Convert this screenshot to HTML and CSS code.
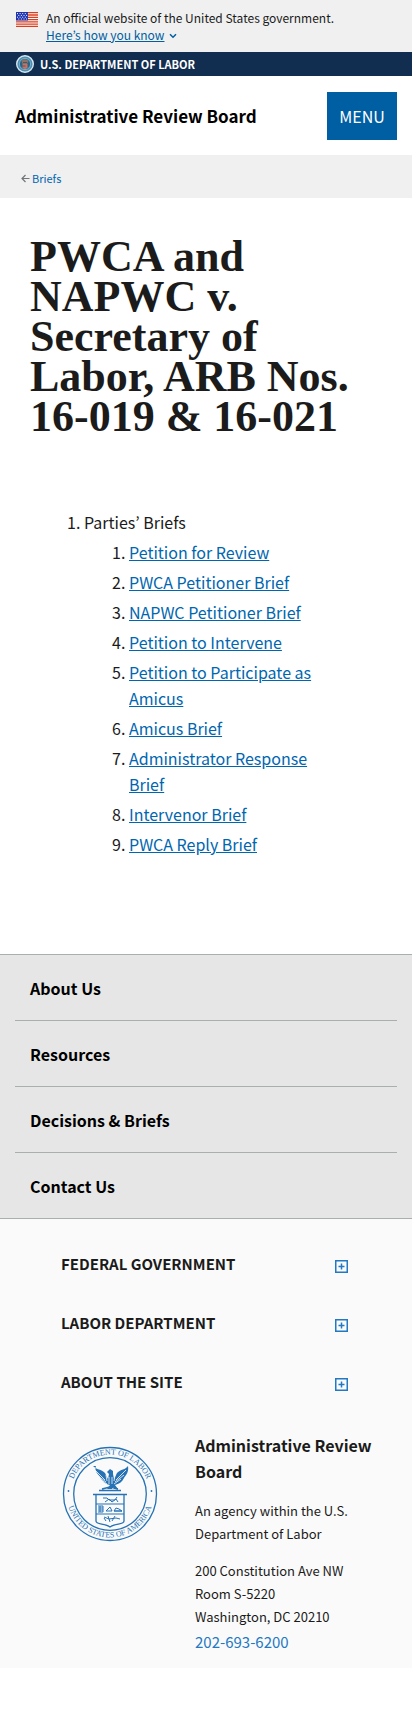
FILE: index.html
```html
<!DOCTYPE html>
<html lang="en">
<head>
<meta charset="utf-8">
<meta name="viewport" content="width=device-width, initial-scale=1">
<title>PWCA and NAPWC v. Secretary of Labor | Administrative Review Board</title>
<link rel="stylesheet" href="styles.css">
</head>
<body>
<section class="banner" aria-label="Official website of the United States government">
  <svg class="flag" viewBox="0 0 22 15" aria-hidden="true">
    <path fill="#fff" d="M0 0h22v15H0z"/>
    <path stroke="#db3e1f" stroke-width="1.3" d="M0 .6h22M0 3h22M0 5.3h22M0 7.6h22M0 9.9h22M0 12.2h22M0 14.4h22"/>
    <path fill="#1e33b1" d="M0 0h12v8.5H0z"/>
    <path stroke="#fff" stroke-width="1" stroke-dasharray="1 1.6" d="M1 1.6h10.500M2.300 3.400h9M1 5.200h10.500M2.300 7h9"/>
  </svg>
  <div>
    <p class="banner-text">An official website of the United States government.</p>
    <button class="banner-button" type="button"><span class="banner-label">Here’s how you know</span><svg class="chevron" viewBox="0 0 8 6" aria-hidden="true"><path d="M1 1.300l3 3 3-3" fill="none" stroke="currentColor" stroke-width="1.500"/></svg></button>
  </div>
</section>

<div class="agency-bar">
  <svg class="agency-seal" viewBox="0 0 18 18" aria-hidden="true">
    <circle cx="9" cy="9" r="8.300" fill="#4c8fb3" stroke="#d8e6ee" stroke-width="1.400"/>
    <circle cx="9" cy="9" r="5.600" fill="#2b6387" stroke="#83bcd6" stroke-width=".8"/>
    <path fill="#8d7365" d="M5.500 6c1-2 5-2.400 7 0l-1.500 3H6.500z"/>
    <path fill="#c37464" d="M6.500 9h5v4L9 14.300 6.500 13z"/>
    <path stroke="#33506c" stroke-width=".8" d="M7 7.500h4M6.500 11h3"/>
  </svg>
  <a class="agency-link" href="#">U.S. DEPARTMENT OF LABOR</a>
</div>

<header class="site-header">
  <a class="site-title" href="#">Administrative Review Board</a>
  <button class="menu-button" type="button">MENU</button>
</header>

<nav class="breadcrumb" aria-label="Breadcrumbs">
  <svg class="back-arrow" viewBox="0 0 9 9" aria-hidden="true"><path d="M8.500 4.500H1M4.500 1L1 4.500 4.500 8" fill="none" stroke="currentColor" stroke-width="1.200"/></svg>
  <a class="breadcrumb-link" href="#">Briefs</a>
</nav>

<main class="content">
  <h1 class="page-title">PWCA and NAPWC v. Secretary of Labor, ARB Nos. 16-019 &amp; 16-021</h1>
  <ol class="briefs">
    <li>Parties’ Briefs
      <ol class="brief-links">
        <li><a href="#">Petition for Review</a></li>
        <li><a href="#">PWCA Petitioner Brief</a></li>
        <li><a href="#">NAPWC Petitioner Brief</a></li>
        <li><a href="#">Petition to Intervene</a></li>
        <li><a href="#">Petition to Participate as Amicus</a></li>
        <li><a href="#">Amicus Brief</a></li>
        <li><a href="#">Administrator Response Brief</a></li>
        <li><a href="#">Intervenor Brief</a></li>
        <li><a href="#">PWCA Reply Brief</a></li>
      </ol>
    </li>
  </ol>
</main>

<footer>
  <nav class="footer-nav" aria-label="Footer">
    <ul class="footer-list">
      <li><a href="#">About Us</a></li>
      <li><a href="#">Resources</a></li>
      <li><a href="#">Decisions &amp; Briefs</a></li>
      <li><a href="#">Contact Us</a></li>
    </ul>
  </nav>
  <div class="footer-main">
    <div class="accordion">
      <button class="accordion-button" type="button">FEDERAL GOVERNMENT
        <svg class="plus" viewBox="0 0 13 13" aria-hidden="true"><path d="M.75.75h11.500v11.500H.75zM6.500 3.500v6M3.500 6.500h6" fill="none" stroke="currentColor" stroke-width="1.500"/></svg></button>
      <button class="accordion-button" type="button">LABOR DEPARTMENT
        <svg class="plus" viewBox="0 0 13 13" aria-hidden="true"><path d="M.75.75h11.500v11.500H.75zM6.500 3.500v6M3.500 6.500h6" fill="none" stroke="currentColor" stroke-width="1.500"/></svg></button>
      <button class="accordion-button" type="button">ABOUT THE SITE
        <svg class="plus" viewBox="0 0 13 13" aria-hidden="true"><path d="M.75.75h11.500v11.500H.75zM6.500 3.500v6M3.500 6.500h6" fill="none" stroke="currentColor" stroke-width="1.500"/></svg></button>
    </div>
    <div class="identity">
      <svg class="seal" viewBox="0 0 96 96" role="img" aria-label="Department of Labor, United States of America">
        <defs>
          <path id="arc-top" d="M8.500 48a39.500 39.500 0 0 1 79 0"/>
          <path id="arc-bottom" d="M4.500 48a43.500 43.500 0 0 0 87 0"/>
        </defs>
        <g fill="none" stroke="#2672b5">
          <circle cx="48" cy="48" r="46.500" stroke-width="1.300"/>
          <circle cx="48" cy="48" r="36.300" stroke-width="1.300"/>
        </g>
        <g class="seal-text">
          <text><textPath href="#arc-top" startOffset="50%" text-anchor="middle">DEPARTMENT OF LABOR</textPath></text>
          <text><textPath href="#arc-bottom" startOffset="50%" text-anchor="middle">UNITED STATES OF AMERICA</textPath></text>
        </g>
        <circle cx="6.500" cy="45" r=".9" fill="#2672b5"/>
        <circle cx="89.500" cy="45" r=".9" fill="#2672b5"/>
        <path fill="#2672b5" d="M31 20c4 4 8 3 12 7l3 6 1-5-2-2 3-3 3 2v3l1 5 3-6c4-4 8-3 11-7 1 6-2 9-4 12-2 4-5 6-9 7l3 4h-4v-2h-2v2h-5l3-4c-5-1-8-4-10-8-2-3-6-6-4-11z"/>
        <path fill="none" stroke="#fafafa" stroke-width=".8" d="M33 24l10 10M35 29l9 7M38 33l7 5M64 24L54 34M62 29l-9 7M59 33l-7 5M47 31v7M50 31v7M44 29l1 6M53 29l-1 6"/>
        <path fill="none" stroke="#2672b5" stroke-width="1.300" d="M37 44.500h22M40 43l8-2 8 2M31 48.500h34M34 49v26c0 4 9 2 14 6 5-4 14-2 14-6V49"/>
        <path fill="none" stroke="#2672b5" stroke-width="1" d="M34 58h28M34 68h28M41 52h4l2 2h6l2-3M43 56l4-3 3 3 4-3 2 3M36 60h5v6h-5M38 60v6M36 62h5M36 64h5M44 65l4-4 2 4zM52 65l2-3 3 1 3 2zM52 65h8M42 71l5 2 7-1 4 1M46 70l2 6M53 70l-3 5M42 72l2 3"/>
      </svg>
      <div class="contact">
        <p class="contact-title">Administrative Review Board</p>
        <p class="contact-text">An agency within the U.S. Department of Labor</p>
        <address class="contact-text">200 Constitution Ave NW<br>Room S-5220<br>Washington, DC 20210</address>
        <a class="phone" href="tel:202-693-6200">202-693-6200</a>
      </div>
    </div>
  </div>
</footer>
</body>
</html>
```

FILE: styles.css
```css
* { box-sizing: border-box; }

body {
  margin: 0;
  background: #fff;
  color: #1b1b1b;
  font-family: "Noto Sans CJK KR", "Noto Sans CJK JP", sans-serif;
  font-size: 16px;
  line-height: 26px;
}

p { margin: 0; }
button { border: 0; background: none; padding: 0; font: inherit; cursor: pointer; }
svg { display: block; flex: none; }

.banner {
  display: flex;
  gap: 8px;
  padding: 9px 16px 8px;
  background: #f0f0f0;
  font-size: 12px;
  line-height: 17px;
}
.flag { width: 22px; height: 15px; margin-top: 3px; }
.banner-button { display: flex; align-items: center; gap: 5px; color: #005ea2; line-height: 18px; }
.banner-label { text-decoration: underline; text-underline-offset: 1px; }
.chevron { width: 8px; height: 6px; margin-top: 2px; }

.agency-bar {
  display: flex;
  align-items: center;
  gap: 6px;
  height: 24px;
  padding: 0 16px;
  background: #112e51;
}
.agency-seal { width: 18px; height: 18px; }
.agency-link { color: #fff; font-size: 11px; font-weight: 700; line-height: 24px; text-decoration: none; }

.site-header {
  display: flex;
  align-items: center;
  justify-content: space-between;
  padding: 16px 15px 15px;
}
.site-title { color: #000; font-size: 17px; font-weight: 700; text-decoration: none; }
.menu-button { width: 70px; height: 48px; background: #005ea2; color: #fff; }

.breadcrumb {
  display: flex;
  align-items: center;
  gap: 2px;
  padding: 10px 21px 7px;
  background: #f0f0f0;
  font-size: 11px;
}
.back-arrow { width: 9px; height: 9px; color: #71767a; }
.breadcrumb-link { color: #0066b0; text-decoration: none; }

.content { padding: 39px 30px 97px; }
.page-title {
  margin: 0 0 72px;
  font-family: "Liberation Serif", serif;
  font-size: 44px;
  font-weight: 700;
  line-height: 40px;
}
.briefs { margin: 0; padding: 0 54px; }
.briefs a { color: #0066b0; text-underline-offset: 1px; }
.brief-links { margin: 4px 0 0; padding: 0 0 0 45px; }
.brief-links li + li { margin-top: 4px; }

.footer-nav {
  padding: 0 15px;
  border-top: 1px solid #a9aeb1;
  border-bottom: 1px solid #a9aeb1;
  background: #e6e6e6;
}
.footer-list { margin: 0; padding: 0; list-style: none; }
.footer-list li + li { border-top: 1px solid #a9aeb1; }
.footer-list a {
  display: block;
  padding: 20px 15px 19px;
  color: #000;
  font-weight: 700;
  text-decoration: none;
}

.footer-main { padding: 15px 30px 13px; background: #fafafa; }
.accordion { padding: 0 34px 0 31px; }
.accordion-button {
  display: flex;
  align-items: center;
  justify-content: space-between;
  width: 100%;
  padding: 17px 0 16px;
  color: #1b1b1b;
  font-size: 15px;
  font-weight: 700;
}
.plus { width: 13px; height: 13px; margin-top: 5px; color: #2378c3; }

.identity { display: flex; align-items: flex-start; gap: 37px; padding: 21px 0 0 32px; }
.seal { width: 96px; height: 96px; margin-top: 14px; }
.seal-text { fill: #2672b5; font-family: "Liberation Serif", serif; font-size: 8px; }
.contact-title { margin-bottom: 15px; font-weight: 700; }
.contact-text { margin-bottom: 14px; font-size: 13px; font-style: normal; line-height: 23px; }
address.contact-text { margin-bottom: 0; }
.phone { color: #2378c3; font-size: 15px; text-decoration: none; }
```
